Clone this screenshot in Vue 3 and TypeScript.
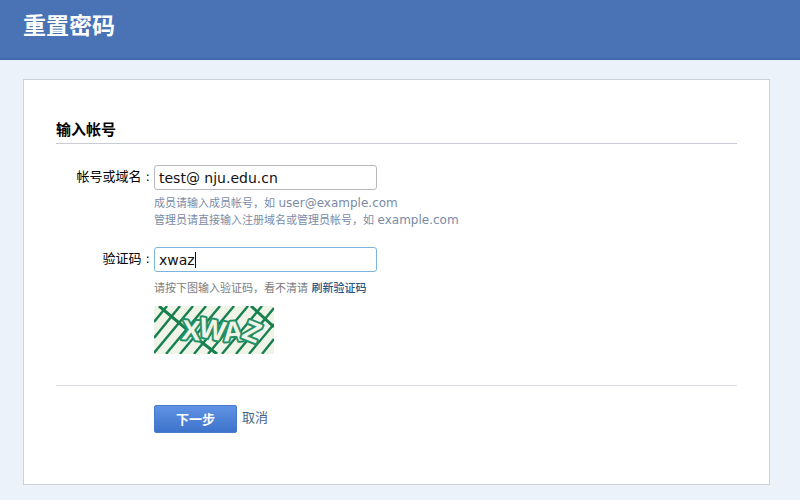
<script setup lang="ts">
import { onMounted, ref } from 'vue'

const account = ref<string>('test@ nju.edu.cn')
const code = ref<string>('xwaz')
const codeInput = ref<HTMLInputElement | null>(null)

onMounted(() => codeInput.value?.focus())
</script>

<template>
  <div class="page">
    <header class="banner">
      <h1>重置密码</h1>
    </header>
    <main class="card">
      <h2>输入帐号</h2>
      <form @submit.prevent>
        <div class="row">
          <label for="account">帐号或域名 :</label>
          <div class="field">
            <input id="account" v-model="account" type="text" autocomplete="off" spellcheck="false" />
            <p class="hint">
              成员请输入成员帐号，如 <span class="sample">user@example.com</span><br />
              管理员请直接输入注册域名或管理员帐号，如 <span class="sample">example.com</span>
            </p>
          </div>
        </div>
        <div class="row">
          <label for="code">验证码 :</label>
          <div class="field">
            <div class="entry">
              <input id="code" ref="codeInput" v-model="code" type="text" autocomplete="off" spellcheck="false" />
              <span class="caret" aria-hidden="true"></span>
            </div>
            <p class="hint neutral">请按下图输入验证码，看不清请 <a href="#">刷新验证码</a></p>
            <svg class="captcha" viewBox="0 0 120 48" role="img" aria-label="验证码图片">
              <rect width="120" height="48" fill="#eff3e8" />
              <g stroke="#17804f" stroke-width="2.4" fill="none">
                <path d="M0 16 13 0M0 32 26 0M0 47 39 0M12 48 52 0M26 48 66 0M40 48 80 0M54 48 94 0M68 48 108 0M82 48 120 2M95 48 120 18M108 48 120 33" />
                <path stroke-width="3" d="M5 0 36 26M46 35 63 48M97 0 120 21" />
              </g>
              <g class="letters">
                <text x="28" y="34" transform="rotate(4 38 24)">X</text>
                <text x="45" y="33" transform="rotate(12 58 24)">W</text>
                <text x="69" y="35" transform="rotate(-3 78 24)">A</text>
                <text x="90" y="35" transform="rotate(22 98 24)">Z</text>
              </g>
            </svg>
          </div>
        </div>
        <div class="actions">
          <button type="submit">下一步</button>
          <a href="#">取消</a>
        </div>
      </form>
    </main>
  </div>
</template>

<style>
html,
body {
  min-height: 100%;
  background: #ebf2f9;
}
</style>

<style scoped>
.page {
  font: 13px/20px "DejaVu Sans", "Noto Sans CJK SC", sans-serif;
  color: #000;
}
.banner {
  box-sizing: border-box;
  height: 60px;
  padding: 8px 23px;
  background: #4a73b6;
  border-bottom: 2px solid #4169ac;
}
h1 {
  margin: 0;
  font: bold 23px/32px "Noto Sans CJK SC", sans-serif;
  color: #fff;
}
.card {
  margin: 19px 30px 15px 23px;
  padding: 39px 32px 51px;
  background: #fff;
  border: 1px solid #cbd2da;
}
h2 {
  margin: 0 0 21px;
  padding-bottom: 4px;
  font: bold 15px/20px "Noto Sans CJK SC", sans-serif;
  border-bottom: 1px solid #c9cbd6;
}
.row {
  display: flex;
  gap: 4px;
  margin-bottom: 18px;
}
.row label {
  width: 94px;
  line-height: 24px;
  text-align: right;
  white-space: nowrap;
}
.field {
  flex: 1;
}
.entry {
  position: relative;
}
.caret {
  position: absolute;
  top: 5px;
  left: 41px;
  width: 1px;
  height: 16px;
  background: #111;
}
input {
  display: block;
  box-sizing: border-box;
  width: 223px;
  height: 25px;
  padding: 0 4px;
  font: 14px "DejaVu Sans", sans-serif;
  color: #111;
  caret-color: transparent;
  background: #fff;
  border: 1px solid #b9babd;
  border-radius: 3px;
  outline: none;
}
input:focus {
  border-color: #7cb4dc;
}
.hint {
  margin: 5px 0 0;
  font: 11px/17px "DejaVu Sans", "Noto Sans CJK SC", sans-serif;
  color: #7a8ba6;
}
.sample {
  font-size: 12px;
}
.neutral {
  margin-top: 8px;
  color: #7d7d7d;
}
a {
  color: #45668e;
  text-decoration: none;
}
.hint a {
  font-weight: 500;
  color: #285586;
}
.captcha {
  display: block;
  width: 120px;
  height: 48px;
  margin-top: 9px;
}
.letters {
  font: bold 28px "Liberation Sans", sans-serif;
  fill: #eff3e8;
  stroke: #239064;
  stroke-width: 4px;
  stroke-linejoin: round;
  paint-order: stroke;
}
.actions {
  display: flex;
  gap: 5px;
  margin-top: 31px;
  padding: 19px 0 0 98px;
  border-top: 1px solid #d9d9df;
}
.actions a {
  line-height: 26px;
}
button {
  width: 83px;
  height: 28px;
  padding: 0 0 2px;
  font: bold 13px "Noto Sans CJK SC", sans-serif;
  color: #fff;
  background: linear-gradient(#6093e4, #3d73cb);
  border: 1px solid #487bcb;
  border-radius: 2px;
}
</style>
